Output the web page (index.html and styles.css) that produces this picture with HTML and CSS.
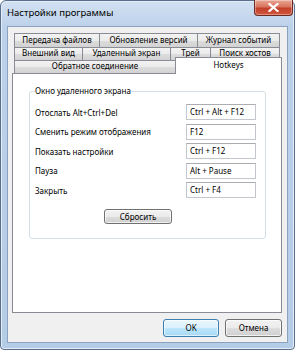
FILE: index.html
```html
<!DOCTYPE html>
<html lang="ru">
<head>
<meta charset="utf-8">
<title>Настройки программы</title>
<link rel="stylesheet" href="styles.css">
</head>
<body>
<div class="window">
  <div class="titlebar">
    <span class="title">Настройки программы</span>
    <div class="close"><svg width="11" height="9" viewBox="0 0 11 9"><path d="M1.5 1 L9.5 8 M9.5 1 L1.5 8" stroke="#fff" stroke-width="2.2" stroke-linecap="square"/></svg></div>
  </div>
  <div class="client">
    <div class="tabctl">
      <div class="tabrow r1">
        <div class="tab w-a">Передача файлов</div>
        <div class="tab w-b">Обновление версий</div>
        <div class="tab w-c">Журнал событий</div>
      </div>
      <div class="tabrow r2">
        <div class="tab w-d">Внешний вид</div>
        <div class="tab w-e">Удаленный экран</div>
        <div class="tab w-f">Трей</div>
        <div class="tab w-g">Поиск хостов</div>
      </div>
      <div class="tabrow r3">
        <div class="tab w-h">Обратное соединение</div>
        <div class="tab sel w-i">Hotkeys</div>
      </div>
      <div class="panel">
        <fieldset class="group">
          <legend>Окно удаленного экрана</legend>
          <div class="rows">
            <div class="row"><span class="lbl">Отослать Alt+Ctrl+Del</span><span class="box">Ctrl + Alt + F12</span></div>
            <div class="row"><span class="lbl">Сменить режим отображения</span><span class="box">F12</span></div>
            <div class="row"><span class="lbl">Показать настройки</span><span class="box">Ctrl + F12</span></div>
            <div class="row"><span class="lbl">Пауза</span><span class="box">Alt + Pause</span></div>
            <div class="row"><span class="lbl">Закрыть</span><span class="box">Ctrl + F4</span></div>
          </div>
          <button class="btn reset">Сбросить</button>
        </fieldset>
      </div>
    </div>
    <div class="actions">
      <button class="btn default ok">OK</button>
      <button class="btn cancel">Отмена</button>
    </div>
  </div>
</div>
</body>
</html>
```

FILE: styles.css
```css
* { box-sizing: border-box; }
html, body { margin: 0; padding: 0; background: #ffffff; }
body {
  width: 295px;
  height: 350px;
  overflow: hidden;
  font-family: "Noto Sans", "Open Sans", sans-serif;
  font-size: 8px;
  color: #000;
}
.window {
  width: 295px;
  height: 350px;
  border: 1px solid #5a6f8c;
  border-radius: 6px 6px 4px 4px;
  background: linear-gradient(#d3e1f1 0, #bcd1ea 26px, #b5cce7 100%);
  box-shadow: inset 0 0 0 1px #e3ecf7;
  display: flex;
  flex-direction: column;
}
.titlebar {
  height: 25px;
  display: flex;
  justify-content: space-between;
  align-items: flex-start;
  padding-left: 6px;
}
.title {
  font-size: 9.5px;
  line-height: 12px;
  margin-top: 6px;
  color: #000;
}
.close {
  width: 39px;
  height: 16px;
  margin-right: 1px;
  margin-top: -1px;
  border: 1px solid #6b2b22;
  border-top: none;
  border-radius: 0 0 4px 4px;
  background: linear-gradient(#e9a795 0, #d9745e 45%, #c2402a 55%, #d2573d 100%);
  box-shadow: inset 0 0 0 1px rgba(255,255,255,0.35);
  display: flex;
  align-items: center;
  justify-content: center;
}
.client {
  margin: 0 6px 6px 6px;
  flex: 1;
  border: 1px solid #8aa2c0;
  background: #f0f0f0;
  padding: 6px 5px 5px 4px;
  display: flex;
  flex-direction: column;
}
.tabctl { display: flex; flex-direction: column; }
.tabrow {
  display: flex;
  padding-left: 2px;
}
.r1 { height: 14px; }
.r2 { height: 13px; }
.r3 { height: 13px; }
.tab {
  height: 100%;
  border: 1px solid #898c95;
  border-bottom: none;
  background: linear-gradient(#f3f3f3 0, #ebebeb 50%, #dddddd 51%, #d2d2d2 100%);
  display: flex;
  align-items: center;
  justify-content: center;
  line-height: 10px;
  padding-bottom: 1px;
  white-space: nowrap;
  margin-left: -1px;
}
.r2 .tab, .r3 .tab { padding-bottom: 2px; }
.tab:first-child { margin-left: 0; }
.w-a { width: 86px; }
.w-b { width: 99px; }
.w-c { width: 83px; }
.w-d { width: 69px; }
.w-e { width: 89px; }
.w-f { width: 41px; }
.w-g { width: 70px; }
.w-h { width: 162px; }
.w-i { width: 107px; }
.r3 .tab.sel {
  background: #ffffff;
  height: 17px;
  margin-top: -3px;
  margin-bottom: -1px;
  position: relative;
  z-index: 1;
  align-items: flex-start;
  padding: 2px 0 0 0;
}
.panel {
  width: 270px;
  height: 240px;
  border: 1px solid #898c95;
  background: #ffffff;
  padding: 11px 0 0 16px;
}
.group {
  width: 237px;
  height: 154px;
  margin: 0;
  padding: 0 9px 0 5px;
  border: 1px solid #d5dfe5;
  border-radius: 3px;
  display: flex;
  flex-direction: column;
}
.group legend {
  padding: 0;
  line-height: 12px;
  color: #000;
}
.rows {
  display: flex;
  flex-direction: column;
  gap: 3.5px;
  padding-top: 7px;
}
.row {
  display: flex;
  justify-content: space-between;
  align-items: center;
  height: 16px;
}
.box {
  width: 70px;
  height: 16px;
  border: 1px solid #c3c6cd;
  border-top-color: #abadb3;
  background: #fff;
  padding-left: 3px;
  line-height: 14px;
}
.btn {
  font-family: inherit;
  font-size: 8px;
  color: #000;
  border: 1px solid #707070;
  border-radius: 3px;
  background: linear-gradient(#f2f2f2 0, #ebebeb 50%, #dddddd 51%, #cfcfcf 100%);
  box-shadow: inset 0 0 0 1px rgba(255,255,255,0.7);
  padding: 0;
  line-height: 12px;
}
.reset {
  width: 68px;
  height: 15px;
  margin: 11px 0 0 69px;
}
.actions {
  display: flex;
  justify-content: flex-end;
  gap: 6px;
  margin-top: 6px;
}
.ok { width: 56px; height: 18px; }
.cancel { width: 57px; height: 18px; }
.btn.default {
  border-color: #3c7fb1;
  background: linear-gradient(#eaf6fd 0, #d9f0fc 50%, #bee6fd 51%, #a7d9f5 100%);
  box-shadow: inset 0 0 0 1px rgba(255,255,255,0.6);
}
```
